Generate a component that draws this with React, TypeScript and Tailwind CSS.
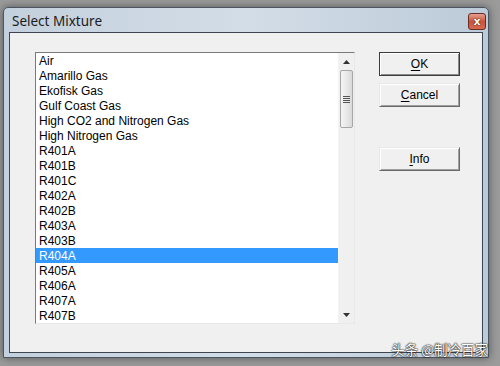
import React from 'react'

const items = [
  'Air',
  'Amarillo Gas',
  'Ekofisk Gas',
  'Gulf Coast Gas',
  'High CO2 and Nitrogen Gas',
  'High Nitrogen Gas',
  'R401A',
  'R401B',
  'R401C',
  'R402A',
  'R402B',
  'R403A',
  'R403B',
  'R404A',
  'R405A',
  'R406A',
  'R407A',
  'R407B',
]

const selected = 'R404A'

function DlgButton({ label, first, isDefault }: { label: string; first: string; isDefault?: boolean }) {
  const rest = label.slice(first.length)
  return (
    <button
      className={
        'h-[24px] w-[81px] bg-[#f0f0f0] text-[12px] text-black flex items-center justify-center ' +
        (isDefault
          ? 'border border-[#3c3c3c] shadow-[inset_1px_1px_0_#ffffff,inset_-1px_-1px_0_#8a8a8a]'
          : 'border border-t-[#e8e8e8] border-l-[#e8e8e8] border-r-[#6a6a6a] border-b-[#6a6a6a] shadow-[inset_1px_1px_0_#ffffff,inset_-1px_-1px_0_#a0a0a0]')
      }
      style={{ fontFamily: '"Liberation Sans", Arial, sans-serif' }}
    >
      <span className="underline underline-offset-[2px]">{first}</span>
      {rest}
    </button>
  )
}

export default function App() {
  return (
    <div className="w-[500px] h-[366px] bg-[#9b9b9b] pl-[3px] pt-[7px] overflow-hidden">
      {/* window */}
      <div className="relative w-[486px] h-[351px] rounded-t-[5px] border border-[#4a5560] bg-gradient-to-r from-[#c3d0dd] via-[#d3dde7] to-[#bccbd9] shadow-[0_0_8px_rgba(0,0,0,0.45)] flex flex-col">
        {/* title bar */}
        <div className="h-[24px] flex items-center pl-[8px] pt-[2px]">
          <span
            className="text-[13.5px] text-[#1b1b1b]"
            style={{ fontFamily: '"Noto Sans", "Open Sans", sans-serif' }}
          >
            Select Mixture
          </span>
        </div>
        <div className="absolute top-[5px] right-[2px] w-[18px] h-[17px] rounded-[3px] border border-[#6b2a22] bg-gradient-to-b from-[#e3a08e] via-[#c9523c] to-[#d46a50] flex items-center justify-center">
          <span
            className="text-[11px] font-bold leading-none text-white [text-shadow:0_0_1px_#3a0f08,0_0_1px_#3a0f08]"
            style={{ fontFamily: '"DejaVu Sans", sans-serif' }}
          >
            x
          </span>
        </div>

        {/* client area */}
        <div className="mx-[5px] h-[321px] border border-[#3d4650] bg-[#f0f0f0] flex pl-[25px] pt-[19px]">
          {/* list box */}
          <div className="w-[320px] h-[272px] border border-t-[#7a7a7a] border-l-[#7a7a7a] border-r-[#e8e8e8] border-b-[#e8e8e8] bg-white flex">
            <div
              className="w-[302px] flex flex-col text-[12px] text-black"
              style={{ fontFamily: '"Liberation Sans", Arial, sans-serif' }}
            >
              {items.map((it) => (
                <div
                  key={it}
                  className={
                    'h-[15px] leading-[16px] pl-[3px] ' +
                    (it === selected ? 'bg-[#3399ff] text-white' : '')
                  }
                >
                  {it}
                </div>
              ))}
            </div>
            {/* scrollbar */}
            <div className="w-[16px] bg-[#f0f0f0] border-l border-[#f4f4f4] flex flex-col">
              <div className="h-[17px] flex items-center justify-center">
                <svg width="7" height="4" viewBox="0 0 7 4">
                  <path d="M0 4 L3.5 0 L7 4 Z" fill="#333" />
                </svg>
              </div>
              <div className="h-[58px] mx-[1px] rounded-[2px] border border-[#a6a6a6] bg-gradient-to-r from-[#f4f4f4] via-[#e9e9e9] to-[#d9d9d9] flex flex-col items-center justify-center gap-[1px]">
                <div className="w-[7px] h-[1px] bg-[#555]" />
                <div className="w-[7px] h-[1px] bg-[#555]" />
                <div className="w-[7px] h-[1px] bg-[#555]" />
                <div className="w-[7px] h-[1px] bg-[#555]" />
              </div>
              <div className="flex-1" />
              <div className="h-[17px] flex items-center justify-center">
                <svg width="7" height="4" viewBox="0 0 7 4">
                  <path d="M0 0 L7 0 L3.5 4 Z" fill="#333" />
                </svg>
              </div>
            </div>
          </div>

          {/* buttons */}
          <div className="ml-[24px] flex flex-col">
            <DlgButton label="OK" first="O" isDefault />
            <div className="h-[7px]" />
            <DlgButton label="Cancel" first="C" />
            <div className="h-[40px]" />
            <DlgButton label="Info" first="I" />
          </div>
        </div>

        {/* watermark */}
        <div
          className="absolute right-[0px] bottom-[-2px] text-[13.5px] text-white [text-shadow:0_0_1px_#222,0_0_1px_#222,0_0_2px_#222]"
          style={{ fontFamily: '"Noto Sans CJK SC", sans-serif' }}
        >
          头条 @制冷百家
        </div>
      </div>
    </div>
  )
}
